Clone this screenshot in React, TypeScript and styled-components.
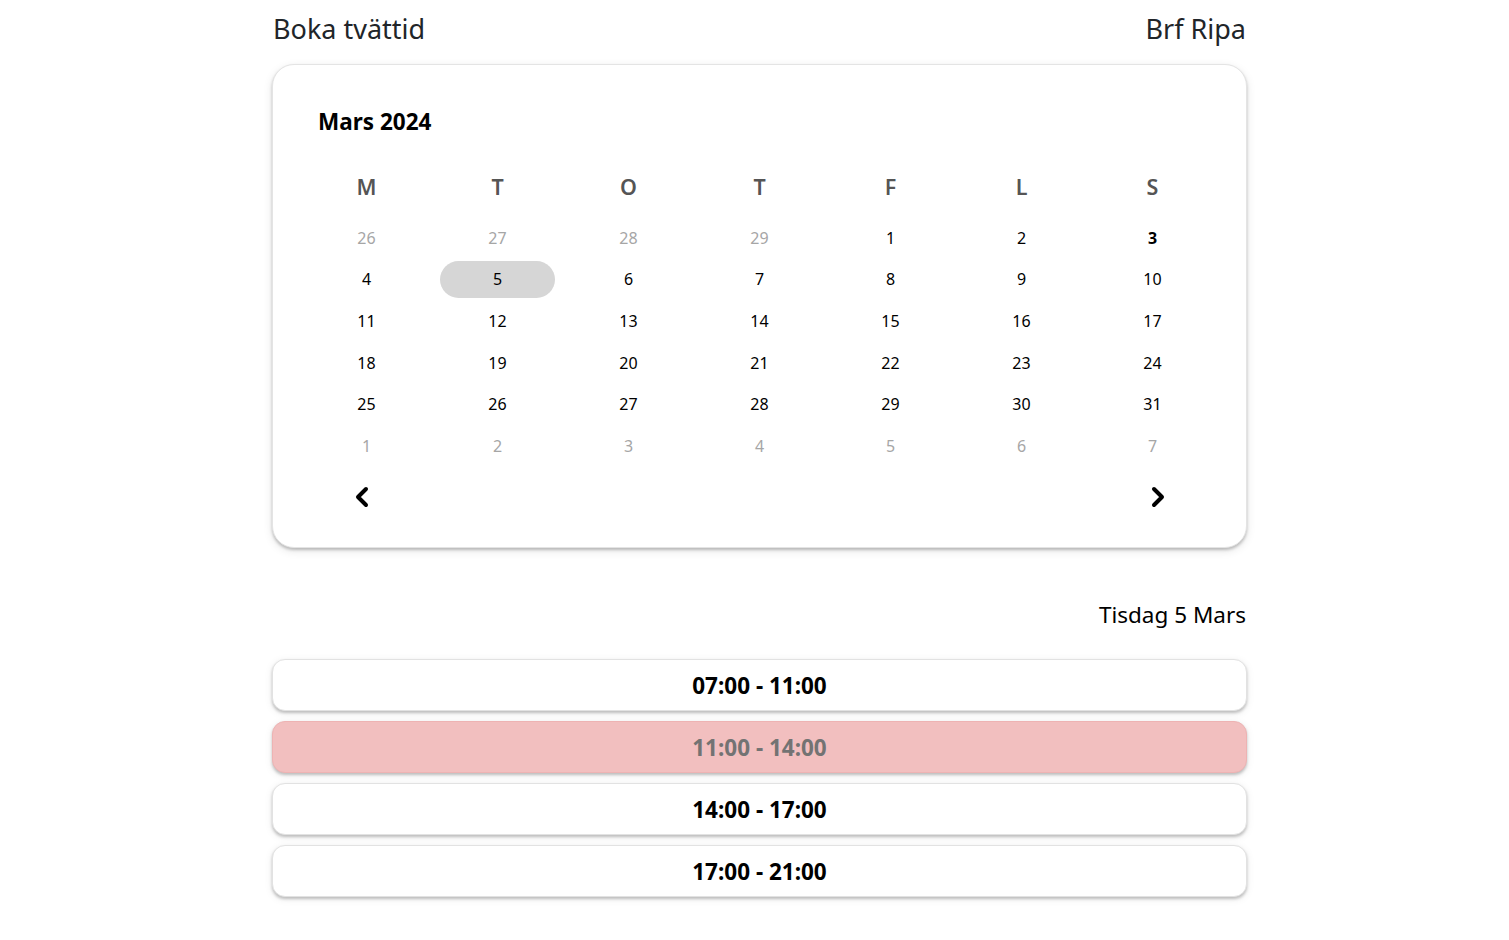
import React from "react";
import styled, { createGlobalStyle } from "styled-components";

const Global = createGlobalStyle`
  html, body { margin: 0; padding: 0; background: #ffffff; }
  body { font-family: "Noto Sans", "Open Sans", sans-serif; color: #000; }
`;

const Page = styled.main`
  width: 975px;
  margin: 0 auto;
  padding: 10px 0 40px 10px;
`;

const Header = styled.header`
  display: flex;
  justify-content: space-between;
  align-items: center;
  height: 38px;
  margin-bottom: 16px;
`;

const HeaderText = styled.h1`
  margin: 0;
  font-size: 27px;
  font-weight: 400;
  color: #212529;
  line-height: 38px;
  padding: 0 1px;
`;

const Card = styled.section`
  border-radius: 22px;
  background: #fff;
  border: 1px solid #e4e4e4;
  box-shadow: 0 2px 3px rgba(0, 0, 0, 0.22), 0 3px 10px rgba(0, 0, 0, 0.1);
  padding: 44px 28px 34px 28px;
`;

const MonthTitle = styled.h2`
  margin: 0 0 30px 17px;
  font-size: 22.5px;
  font-weight: 700;
  line-height: 26px;
`;

const Grid = styled.div`
  display: grid;
  grid-template-columns: repeat(7, 1fr);
  grid-template-rows: 52px repeat(6, 41.6px);
`;

const WeekDay = styled.div`
  display: flex;
  align-items: center;
  justify-content: center;
  height: 42px;
  font-size: 21.5px;
  font-weight: 600;
  color: #555;
`;

const Day = styled.div<{ $muted?: boolean; $selected?: boolean; $today?: boolean }>`
  display: flex;
  align-items: center;
  justify-content: center;
  margin: 2px 8px;
  border-radius: 999px;
  font-size: 16px;
  font-weight: ${(p) => (p.$today ? 700 : 400)};
  color: ${(p) => (p.$muted ? "#a6a6a6" : "#000")};
  background: ${(p) => (p.$selected ? "#d6d6d6" : "transparent")};
  cursor: pointer;
`;

const Nav = styled.div`
  display: flex;
  justify-content: space-between;
  align-items: center;
  height: 32px;
  margin-top: 14px;
  padding: 0 52px 0 53px;
`;

const NavButton = styled.button`
  background: none;
  border: none;
  padding: 0;
  display: flex;
  cursor: pointer;
`;

const DateLabel = styled.div`
  text-align: right;
  font-size: 22.5px;
  line-height: 32px;
  margin: 51px 1px 28px 0;
`;

const SlotList = styled.div`
  display: flex;
  flex-direction: column;
  gap: 10px;
`;

const Slot = styled.button<{ $booked?: boolean }>`
  height: 52px;
  padding-top: 3px;
  border-radius: 13px;
  font-family: inherit;
  font-size: 22.5px;
  font-weight: 700;
  color: ${(p) => (p.$booked ? "#737373" : "#000")};
  background: ${(p) => (p.$booked ? "#f2bfbf" : "#fff")};
  border: 1px solid ${(p) => (p.$booked ? "#eeb3b3" : "#e2e2e2")};
  box-shadow: 0 2px 3px rgba(0, 0, 0, 0.22), 0 2px 8px rgba(0, 0, 0, 0.08);
  cursor: pointer;
`;

const Chevron = ({ dir }: { dir: "left" | "right" }) => (
  <svg width="16" height="24" viewBox="0 0 16 24">
    <polyline
      points={dir === "left" ? "12,4 4,12 12,20" : "4,4 12,12 4,20"}
      fill="none"
      stroke="#000"
      strokeWidth="4"
      strokeLinecap="round"
      strokeLinejoin="round"
    />
  </svg>
);

const weekdays = ["M", "T", "O", "T", "F", "L", "S"];

type D = { n: number; muted?: boolean };
const days: D[] = [
  ...[26, 27, 28, 29].map((n) => ({ n, muted: true })),
  ...Array.from({ length: 31 }, (_, i) => ({ n: i + 1 })),
  ...[1, 2, 3, 4, 5, 6, 7].map((n) => ({ n, muted: true })),
];

const slots = [
  { t: "07:00 - 11:00" },
  { t: "11:00 - 14:00", booked: true },
  { t: "14:00 - 17:00" },
  { t: "17:00 - 21:00" },
];

export default function App() {
  return (
    <>
      <Global />
      <Page>
        <Header>
          <HeaderText>Boka tvättid</HeaderText>
          <HeaderText>Brf Ripa</HeaderText>
        </Header>
        <Card>
          <MonthTitle>Mars 2024</MonthTitle>
          <Grid>
            {weekdays.map((w, i) => (
              <WeekDay key={i}>{w}</WeekDay>
            ))}
            {days.map((d, i) => (
              <Day
                key={i}
                $muted={d.muted}
                $selected={!d.muted && d.n === 5}
                $today={!d.muted && d.n === 3}
              >
                {d.n}
              </Day>
            ))}
          </Grid>
          <Nav>
            <NavButton aria-label="Föregående månad">
              <Chevron dir="left" />
            </NavButton>
            <NavButton aria-label="Nästa månad">
              <Chevron dir="right" />
            </NavButton>
          </Nav>
        </Card>
        <DateLabel>Tisdag 5 Mars</DateLabel>
        <SlotList>
          {slots.map((s) => (
            <Slot key={s.t} $booked={s.booked}>
              {s.t}
            </Slot>
          ))}
        </SlotList>
      </Page>
    </>
  );
}
